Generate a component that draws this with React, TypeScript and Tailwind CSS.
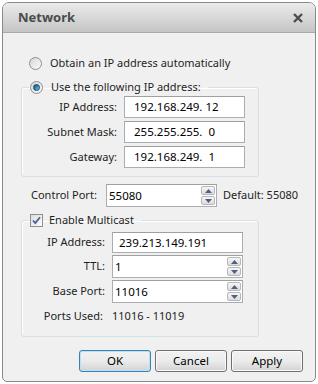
import React from 'react';

const font = { fontFamily: '"Noto Sans", "Open Sans", sans-serif' };

function Radio({ checked }: { checked?: boolean }) {
  return (
    <span className="shrink-0 w-[13px] h-[13px] rounded-full border border-[#8e8f8f] bg-gradient-to-br from-[#d6d6d6] to-[#fbfbfb] flex items-center justify-center">
      {checked && (
        <span className="w-[7px] h-[7px] rounded-full bg-gradient-to-br from-[#1b4a6e] via-[#2c8cc4] to-[#7fd0f6] border border-[#1d3e5c]" />
      )}
    </span>
  );
}

function Check() {
  return (
    <span className="shrink-0 w-[13px] h-[13px] border border-[#8e8f8f] bg-gradient-to-br from-[#dcdcdc] to-[#fdfdfd] flex items-center justify-center">
      <svg width="11" height="11" viewBox="0 0 11 11">
        <path d="M2 5.5 L4.3 8 L9 2.2" fill="none" stroke="#4a5f97" strokeWidth="1.8" />
      </svg>
    </span>
  );
}

function Spinner() {
  return (
    <div className="flex flex-col gap-[1px] w-[15px] py-[1px] pr-[1px]">
      {[0, 1].map((i) => (
        <div
          key={i}
          className="flex-1 rounded-[2px] border border-[#b8b8b8] bg-gradient-to-b from-[#f6f6f6] to-[#dcdcdc] flex items-center justify-center"
        >
          <svg width="7" height="4" viewBox="0 0 7 4">
            <path d={i === 0 ? 'M0 4 L3.5 0 L7 4 Z' : 'M0 0 L3.5 4 L7 0 Z'} fill="#4d6185" />
          </svg>
        </div>
      ))}
    </div>
  );
}

function Input({ value, w, h = 22, spin, pl = 'pl-[9px]' }: { value: string; w: number; h?: number; spin?: boolean; pl?: string }) {
  return (
    <div
      className="shrink-0 flex bg-white border border-[#abadb3] border-t-[#a0a0a0]"
      style={{ width: w, height: h }}
    >
      <div className={`flex-1 flex items-center text-[11.5px] text-black whitespace-pre ${pl}`}>{value}</div>
      {spin && <Spinner />}
    </div>
  );
}

function Row({ label, labelW, children }: { label: string; labelW: number; children: React.ReactNode }) {
  return (
    <div className="flex items-center">
      <div className="shrink-0 whitespace-nowrap text-right text-[11px] text-[#1e1e1e] pr-[7px]" style={{ width: labelW }}>
        {label}
      </div>
      {children}
    </div>
  );
}

function Button({ label, def }: { label: string; def?: boolean }) {
  return (
    <div
      className={`w-[72px] h-[22px] rounded-[3px] border flex items-center justify-center text-[11.5px] text-black bg-gradient-to-b from-[#f2f2f2] via-[#ebebeb] to-[#d3d3d3] ${
        def ? 'border-[#3c7fb1] shadow-[inset_0_0_0_1px_#b6e3fb]' : 'border-[#707070] shadow-[inset_0_0_0_1px_#fbfbfb]'
      }`}
    >
      {label}
    </div>
  );
}

export default function App() {
  return (
    <div className="w-[318px] h-[384px] bg-white pt-[2px] pl-[2px] text-[11px]" style={font}>
      <div className="w-[314px] h-[380px] border border-[#8a8a8a] rounded-t-[7px] rounded-b-[5px] overflow-hidden flex flex-col bg-[#f0f0f0]">
        <div className="h-[30px] shrink-0 bg-gradient-to-b from-[#ebebeb] to-[#c5c5c5] border-b border-[#a9a9a9] flex items-center justify-between pl-[15px] pr-[12px]">
          <span className="text-[13px] font-bold text-[#4b4b4b]">Network</span>
          <svg width="10" height="10" viewBox="0 0 10 10">
            <path d="M1 1 L9 9 M9 1 L1 9" stroke="#4d4d4d" strokeWidth="2.4" />
          </svg>
        </div>

        <div className="flex-1 flex flex-col pl-[18px] pr-[56px]">
          <div className="flex items-center gap-[8px] mt-[22px] pl-[8px] h-[16px] text-[11px] text-[#1e1e1e]">
            <Radio />
            <span className="whitespace-nowrap">Obtain an IP address automatically</span>
          </div>

          <fieldset className="mt-[8px] border border-[#d5dfe5] rounded-[3px] shadow-[inset_1px_1px_0_#ffffff] pb-[8px]">
            <legend className="ml-[7px] px-[1px] flex items-center gap-[8px] h-[16px] text-[11px] text-[#1e1e1e]">
              <Radio checked />
              <span className="pr-[6px] whitespace-nowrap">Use the following IP address:</span>
            </legend>
            <div className="flex flex-col gap-[3px] mt-[1px]">
              <Row label="IP Address:" labelW={102}>
                <Input value="192.168.249. 12" w={121} />
              </Row>
              <Row label="Subnet Mask:" labelW={102}>
                <Input value="255.255.255.  0" w={121} />
              </Row>
              <Row label="Gateway:" labelW={102}>
                <Input value="192.168.249.  1" w={121} />
              </Row>
            </div>
          </fieldset>

          <div className="flex items-center mt-[7px] text-[11px] text-[#1e1e1e]">
            <span className="shrink-0 w-[85px] pl-[10px] whitespace-nowrap">Control Port:</span>
            <Input value="55080" w={111} h={23} spin pl="pl-[2px]" />
            <span className="ml-[6px] whitespace-nowrap">Default: 55080</span>
          </div>

          <fieldset className="mt-[5px] border border-[#d5dfe5] rounded-[3px] shadow-[inset_1px_1px_0_#ffffff] pb-[9px]">
            <legend className="ml-[7px] px-[1px] flex items-center gap-[6px] h-[16px] text-[11px] text-[#1e1e1e]">
              <Check />
              <span className="pr-[6px] whitespace-nowrap">Enable Multicast</span>
            </legend>
            <div className="flex flex-col gap-[2px] mt-[4px]">
              <Row label="IP Address:" labelW={90}>
                <Input value="239.213.149.191" w={131} h={21} pl="pl-[6px]" />
              </Row>
              <Row label="TTL:" labelW={90}>
                <Input value="1" w={131} h={23} spin pl="pl-[2px]" />
              </Row>
              <Row label="Base Port:" labelW={90}>
                <Input value="11016" w={131} h={23} spin pl="pl-[2px]" />
              </Row>
              <div className="flex items-center h-[22px] text-[11px] text-[#1e1e1e]">
                <span className="shrink-0 w-[90px] text-right pr-[9px] whitespace-nowrap">Ports Used:</span>
                <span>11016 - 11019</span>
              </div>
            </div>
          </fieldset>

          <div className="flex justify-end gap-[4px] mt-[13px] -mr-[44px]">
            <Button label="OK" def />
            <Button label="Cancel" />
            <Button label="Apply" />
          </div>
        </div>
      </div>
    </div>
  );
}
